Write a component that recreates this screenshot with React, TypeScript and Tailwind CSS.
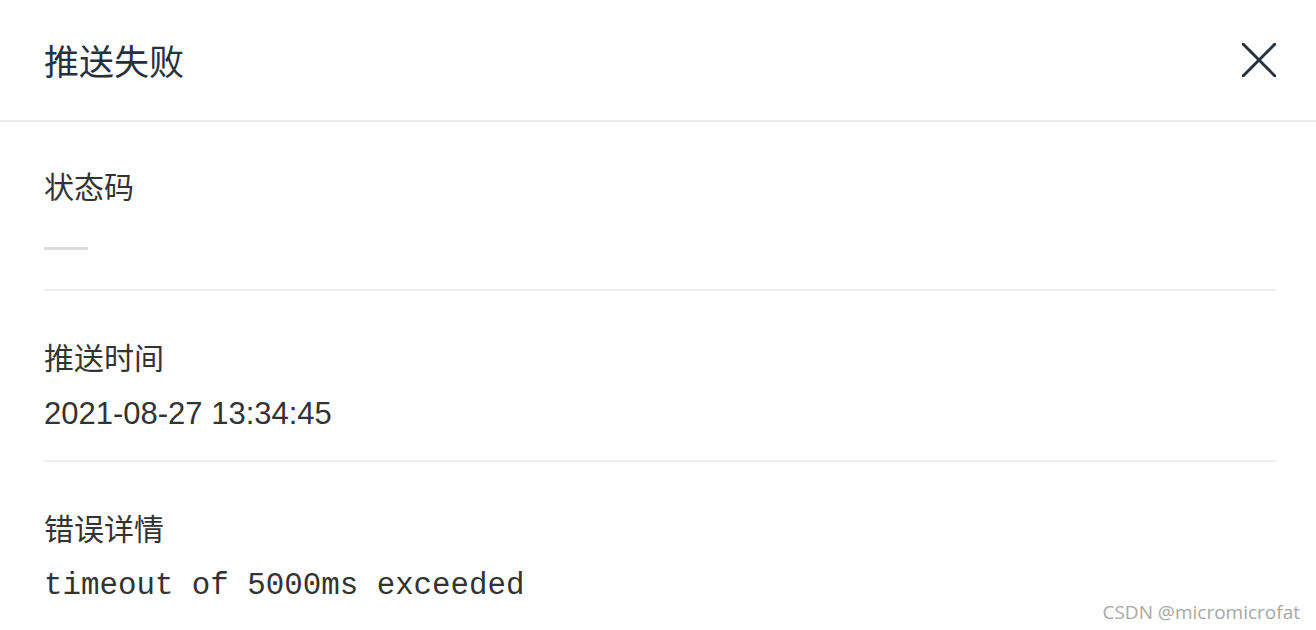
export default function App() {
  const cjk = { fontFamily: '"Noto Sans CJK SC", "Noto Sans", sans-serif' };

  return (
    <div className="relative w-[1316px] h-[630px] bg-white overflow-hidden" style={cjk}>
      {/* Header */}
      <div className="h-[122px] pl-[44px] pr-[40px] flex items-center justify-between border-b-2 border-[#e8e8e8]">
        <h1 className="text-[35px] leading-[40px] text-[#27303d] font-normal">推送失败</h1>
        <button className="w-[34px] h-[34px] flex items-center justify-center text-[#27303d]">
          <svg width="34" height="34" viewBox="0 0 34 34" fill="none">
            <path d="M1 1L33 33M33 1L1 33" stroke="currentColor" strokeWidth="3" strokeLinecap="round" />
          </svg>
        </button>
      </div>

      {/* Body */}
      <div className="pl-[44px] pr-[40px]">
        <div className="pt-[43px] pb-[27px] border-b-2 border-[#eeeeee]">
          <div className="text-[30px] leading-[40px] text-[#333333]">状态码</div>
          <div className="mt-[17px] h-[40px] pt-[25px]">
            <div className="w-[44px] h-[3px] bg-[#dcdcdc]"></div>
          </div>
        </div>

        <div className="pt-[45px] pb-[26px] border-b-2 border-[#eeeeee]">
          <div className="text-[30px] leading-[40px] text-[#333333]">推送时间</div>
          <div
            className="mt-[18px] text-[31px] leading-[40px] text-[#333333]"
            style={{ fontFamily: '"Liberation Sans", Arial, sans-serif' }}
          >
            2021-08-27 13:34:45
          </div>
        </div>

        <div className="pt-[45px]">
          <div className="text-[30px] leading-[40px] text-[#333333]">错误详情</div>
          <div
            className="mt-[19px] text-[30.8px] leading-[40px] text-[#333333]"
            style={{ fontFamily: '"Liberation Mono", "Courier New", monospace' }}
          >
            timeout of 5000ms exceeded
          </div>
        </div>
      </div>

      {/* Watermark */}
      <div
        className="absolute right-[16px] bottom-[6px] text-[19px] leading-[24px] text-[#a8a8a8]"
        style={{ fontFamily: '"Open Sans", "Noto Sans", sans-serif' }}
      >
        CSDN @micromicrofat
      </div>
    </div>
  );
}
